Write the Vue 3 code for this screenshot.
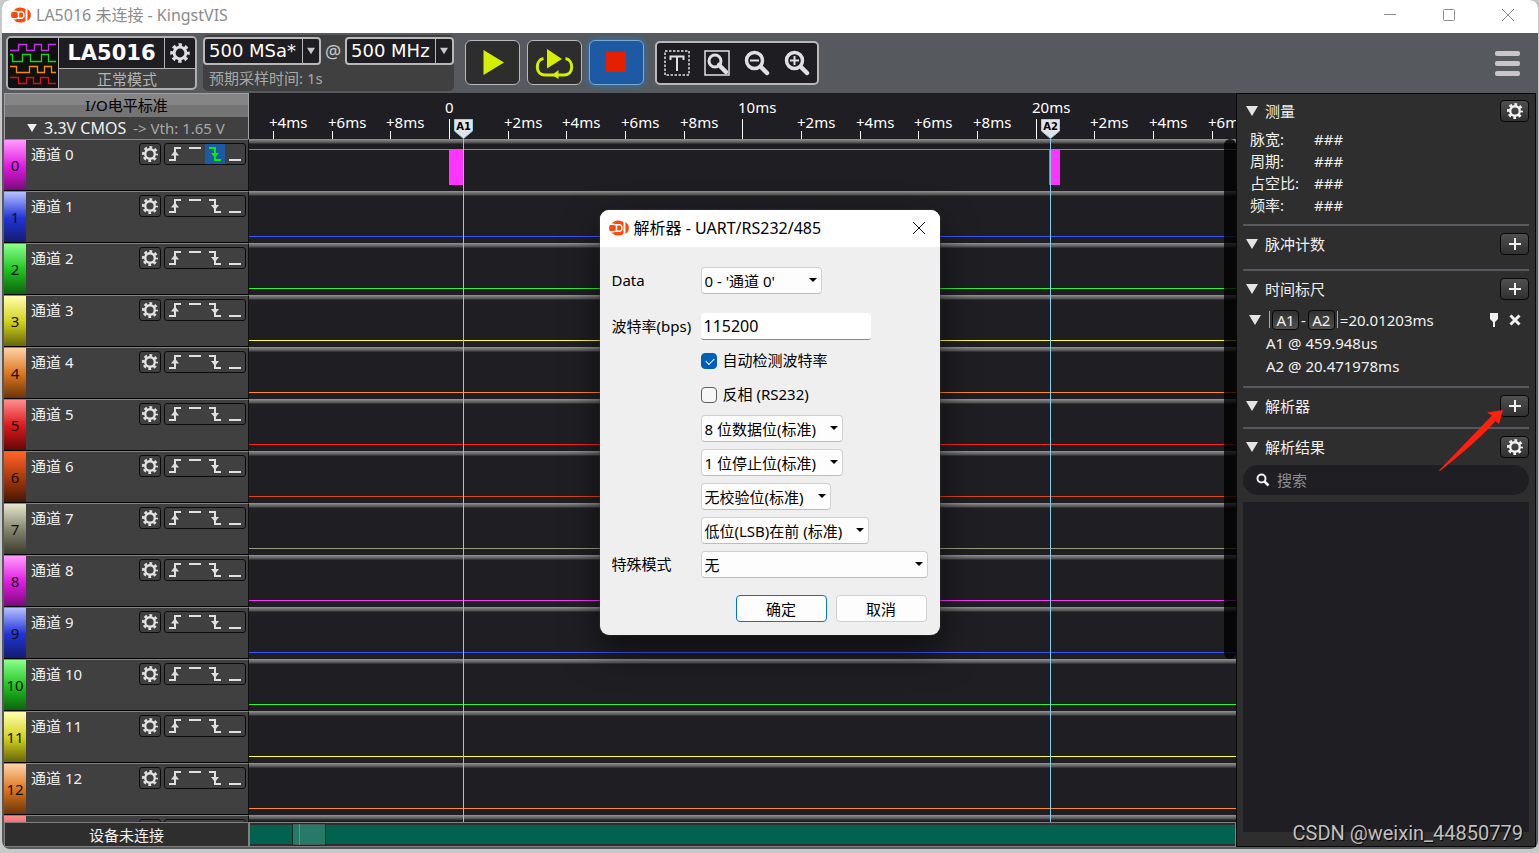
<script setup>
import { ref } from 'vue'

const palette = [
  ['#ff9cff', '#e21be2', '#7a0a7a', '#ff35ff'],
  ['#b4c0ff', '#2233d8', '#131d70', '#3a55ff'],
  ['#8cff8c', '#1fc41f', '#0d620d', '#2bf52b'],
  ['#ffffae', '#d2d21c', '#66660c', '#ffff30'],
  ['#ffd2a6', '#dc741c', '#6a350a', '#ff8c2c'],
  ['#ff8c8c', '#dc1818', '#620808', '#ff2020'],
  ['#ff6428', '#a8380c', '#461604', '#d84a10'],
  ['#e6e6cc', '#84846c', '#3a3a2e', '#9c9c80'],
]

const channels = Array.from({ length: 14 }, (_, i) => {
  const [light, mid, dark, line] = palette[i % palette.length]
  return {
    id: i,
    name: `通道 ${i}`,
    tag: { background: `linear-gradient(${light}, ${mid} 52%, ${dark})` },
    line,
  }
})

const triggers = [
  { key: 'rise', label: '上升沿' },
  { key: 'high', label: '高电平' },
  { key: 'fall', label: '下降沿' },
  { key: 'low', label: '低电平' },
]

// Time scale of the plot: horizontal origin and pixels per millisecond.
const originPx = 200.1
const pxPerMs = 29.33
const at = (ms) => `${Math.round(originPx + ms * pxPerMs)}px`
const ticks = []
for (let ms = -6; ms <= 26; ms += 2) {
  const major = ms % 10 === 0
  const rest = ((ms % 10) + 10) % 10
  ticks.push({ ms, major, label: major ? (ms ? `${ms}ms` : '0') : `+${rest}ms` })
}

const markers = [
  { name: 'A1', ms: 0.459948 },
  { name: 'A2', ms: 20.471978 },
]
const pulses = [
  { from: 0, to: 0.48 },
  { from: 20.47, to: 20.83 },
]

const measures = ['脉宽:', '周期:', '占空比:', '频率:']

const baud = ref('115200')
const autoDetect = ref(true)
const inverted = ref(false)
</script>

<template>
  <div class="desktop">
    <svg class="defs" aria-hidden="true">
      <symbol id="gear" viewBox="-9 -9 18 18">
        <circle r="4.8" fill="none" stroke="currentColor" stroke-width="2.4" />
        <circle r="6.5" fill="none" stroke="currentColor" stroke-width="3" stroke-dasharray="2.7 2.405" stroke-dashoffset="1.35" />
      </symbol>
      <symbol id="plus" viewBox="0 0 14 14">
        <path d="M7 1V13M1 7H13" fill="none" stroke="currentColor" stroke-width="2" />
      </symbol>
      <symbol id="down" viewBox="0 0 12 10">
        <path d="M0 0H12L6 10Z" fill="currentColor" />
      </symbol>
      <symbol id="brand" viewBox="0 0 20 16">
        <path d="M2.500 3.500A8.4 7.3 0 0 1 14.500 2V14A8.4 7.3 0 0 1 2.500 12.500H5.500V11H.8A7 7 0 0 1 .8 5H5.500V3.500Z" fill="#fb4a0c" />
        <path d="M5.500 4.800H10.500A2.300 2.300 0 0 1 12.800 7.100V8.900A2.300 2.300 0 0 1 10.500 11.200H5.500M7.500 4.800V11.200" fill="none" stroke="#fff" stroke-width="1.500" />
        <path d="M16.800 2.600Q19.800 4.800 19.500 8Q19.800 11.200 16.800 13.400Z" fill="#fb4a0c" stroke="#fb4a0c" stroke-width=".6" />
      </symbol>
      <symbol id="rise" viewBox="0 0 20 20">
        <path d="M4 16H10V4H16" fill="none" stroke="currentColor" stroke-width="2" />
        <path d="M6 11.5L10 6.5L14 11.5Z" fill="currentColor" />
      </symbol>
      <symbol id="high" viewBox="0 0 20 20">
        <path d="M4 4H16" stroke="currentColor" stroke-width="2" />
      </symbol>
      <symbol id="fall" viewBox="0 0 20 20">
        <path d="M4 4H10V16H16" fill="none" stroke="currentColor" stroke-width="2" />
        <path d="M6 9L10 14L14 9Z" fill="currentColor" />
      </symbol>
      <symbol id="low" viewBox="0 0 20 20">
        <path d="M4 16H16" stroke="currentColor" stroke-width="2" />
      </symbol>
    </svg>

    <div class="window">
      <header class="titlebar">
        <svg class="brand"><use href="#brand" /></svg>
        <h1>LA5016 未连接 - KingstVIS</h1>
        <div class="winctl">
          <button aria-label="最小化"><svg viewBox="0 0 12 12"><path d="M0 5.5H12" /></svg></button>
          <button aria-label="最大化"><svg viewBox="0 0 12 12"><rect x=".5" y=".5" width="11" height="11" rx="1" /></svg></button>
          <button aria-label="关闭"><svg viewBox="0 0 12 12"><path d="M0 0L12 12M12 0L0 12" /></svg></button>
        </div>
      </header>

      <div class="toolbar">
        <div class="device">
          <svg class="device-logo" viewBox="0 0 50 50">
            <g fill="none" stroke-width="1.3">
              <path stroke="#c234e8" d="M2 12.5H10.5V6.5H18.5V12.5H26.5V6.5H33.5V12.5H40.5V6.5H48" />
              <path stroke="#18d418" d="M2 16.5H4.5V23.5H14.5V16.5H22.5V23.5H33.5V16.5H40.5V23.5H48" />
              <path stroke="#f58a10" d="M2 28.5H8.5V34.5H21.5V28.5H29.5V34.5H36.5V28.5H43.5V34.5H48" />
              <path stroke="#d81212" d="M2 39.5H10.5V45.5H18.5V39.5H25.5V45.5H32.5V39.5H40.5V45.5H48" />
            </g>
          </svg>
          <div class="device-info">
            <div class="device-top">
              <strong>LA5016</strong>
              <button aria-label="设备设置"><svg class="i22"><use href="#gear" /></svg></button>
            </div>
            <div class="device-mode">正常模式</div>
          </div>
        </div>

        <div class="sampling">
          <div class="rates">
            <div class="combo">
              <select aria-label="采样率"><option>500 MSa*</option></select>
              <svg><use href="#down" /></svg>
            </div>
            <span>@</span>
            <div class="combo">
              <select aria-label="时钟"><option>500 MHz</option></select>
              <svg><use href="#down" /></svg>
            </div>
          </div>
          <div class="expected">预期采样时间: 1s</div>
        </div>

        <div class="runs">
          <button aria-label="开始">
            <svg viewBox="0 0 53 43"><path d="M17.5 9V34L38 21.5Z" fill="#d4f000" /></svg>
          </button>
          <button aria-label="循环采样">
            <svg viewBox="0 0 53 43">
              <path d="M19 8V27.5L34 18Z" fill="#d4f000" />
              <path d="M15.5 17.5C7 19 7 34 17 34H36C46 34 46 19 37.500 17.500" fill="none" stroke="#d4f000" stroke-width="3" />
              <path d="M24 34L30.500 29V38Z" fill="#d4f000" />
            </svg>
          </button>
          <button class="stop" aria-label="停止">
            <svg viewBox="0 0 53 43"><path d="M16 11H36V31H16Z" fill="#e42000" /></svg>
          </button>
        </div>

        <div class="zooms">
          <button aria-label="标签">
            <svg viewBox="0 0 26 26">
              <rect x="1" y="1" width="24" height="24" fill="none" stroke="#e0e0e0" stroke-width="1.500" stroke-dasharray="2.500 1.500" />
              <path d="M6.500 10V6.500H19.500V10M13 6.500V21" fill="none" stroke="#e0e0e0" stroke-width="2" />
            </svg>
          </button>
          <button aria-label="适应窗口">
            <svg viewBox="0 0 26 26" fill="none" stroke="#e0e0e0">
              <rect x="1" y="1" width="24" height="24" stroke-width="1.500" />
              <circle cx="11" cy="11" r="6" stroke-width="3" />
              <path d="M15 15L22 22" stroke-width="4.500" stroke-linecap="round" />
            </svg>
          </button>
          <button aria-label="缩小">
            <svg viewBox="0 0 26 26" fill="none" stroke="#e0e0e0">
              <circle cx="10.500" cy="10.500" r="8" stroke-width="3.500" />
              <path d="M17 17L23 23" stroke-width="4.500" stroke-linecap="round" />
              <path d="M6 10.500H15" stroke-width="2" />
            </svg>
          </button>
          <button aria-label="放大">
            <svg viewBox="0 0 26 26" fill="none" stroke="#e0e0e0">
              <circle cx="10.500" cy="10.500" r="8" stroke-width="3.500" />
              <path d="M17 17L23 23" stroke-width="4.500" stroke-linecap="round" />
              <path d="M6 10.500H15M10.500 6V15" stroke-width="2" />
            </svg>
          </button>
        </div>

        <button class="menu" aria-label="菜单"><i></i><i></i><i></i></button>
      </div>

      <div class="body">
        <main class="main">
          <div class="head">
            <div class="levels">
              <div class="levels-title">I/O电平标准</div>
              <button class="levels-value">
                <svg><use href="#down" /></svg><b>3.3V CMOS</b><span>-&gt; Vth: 1.65 V</span>
              </button>
            </div>
            <div class="ruler">
              <div v-for="t in ticks" :key="t.ms" class="tick" :class="{ major: t.major }" :style="{ left: at(t.ms) }">
                <span>{{ t.label }}</span>
              </div>
              <div v-for="m in markers" :key="m.name" class="flag" :style="{ left: at(m.ms) }">
                <svg viewBox="0 0 19 20"><path d="M.5 .5H18.500V12L9.500 19.500L.5 12Z" fill="#e4e4e4" stroke="#8fd0ec" /></svg>
                <b>{{ m.name }}</b>
              </div>
            </div>
          </div>

          <div class="channels">
            <div v-for="c in channels" :key="c.id" class="channel">
              <div class="panel">
                <div class="tag" :style="c.tag">{{ c.id }}</div>
                <span class="name">{{ c.name }}</span>
                <button class="cfg" :aria-label="c.name + ' 设置'"><svg class="i18"><use href="#gear" /></svg></button>
                <div class="triggers">
                  <button
                    v-for="t in triggers"
                    :key="t.key"
                    :class="{ on: c.id === 0 && t.key === 'fall' }"
                    :aria-label="t.label"
                  ><svg><use :href="'#' + t.key" /></svg></button>
                </div>
              </div>
              <div class="wave">
                <i class="level" :class="{ up: c.id === 0 }" :style="{ background: c.line }"></i>
                <template v-if="c.id === 0">
                  <i
                    v-for="p in pulses"
                    :key="p.from"
                    class="pulse"
                    :style="{ left: at(p.from), width: Math.round((p.to - p.from) * pxPerMs) + 'px' }"
                  ></i>
                </template>
              </div>
            </div>
            <div class="overlay">
              <i v-for="m in markers" :key="m.name" class="cursor" :style="{ left: at(m.ms) }"></i>
              <i class="vbar"></i>
            </div>
          </div>

          <footer class="foot">
            <div class="status">设备未连接</div>
            <div class="overview"><div class="handle"><i></i></div></div>
          </footer>
        </main>

        <aside class="side">
          <section>
            <div class="sec-head">
              <svg class="tri"><use href="#down" /></svg><h2>测量</h2>
              <button aria-label="测量设置"><svg class="i18"><use href="#gear" /></svg></button>
            </div>
            <dl>
              <template v-for="m in measures" :key="m"><dt>{{ m }}</dt><dd>###</dd></template>
            </dl>
          </section>
          <section class="pulse-count">
            <div class="sec-head">
              <svg class="tri"><use href="#down" /></svg><h2>脉冲计数</h2>
              <button aria-label="添加脉冲计数"><svg class="i14"><use href="#plus" /></svg></button>
            </div>
          </section>
          <section class="rulers">
            <div class="sec-head">
              <svg class="tri"><use href="#down" /></svg><h2>时间标尺</h2>
              <button aria-label="添加时间标尺"><svg class="i14"><use href="#plus" /></svg></button>
            </div>
            <div class="pair">
              <svg class="tri"><use href="#down" /></svg>
              <i class="bar"></i><button class="chip">A1</button><span>-</span><button class="chip">A2</button><i class="bar"></i><span>=20.01203ms</span>
              <button class="pin" aria-label="固定"><svg viewBox="0 0 10 14"><path d="M1 0H9V6L6 9V14H4V9L1 6Z" fill="currentColor" /></svg></button>
              <button class="drop" aria-label="删除"><svg viewBox="0 0 12 12"><path d="M1.500 1.500L10.500 10.500M10.500 1.500L1.500 10.500" stroke="currentColor" stroke-width="3" /></svg></button>
            </div>
            <p>A1 @ 459.948us</p>
            <p>A2 @ 20.471978ms</p>
          </section>
          <section class="decoders">
            <div class="sec-head">
              <svg class="tri"><use href="#down" /></svg><h2>解析器</h2>
              <button aria-label="添加解析器"><svg class="i14"><use href="#plus" /></svg></button>
            </div>
            <svg class="pointer" viewBox="0 0 65 61"><path d="M0 60.500L53 5.500L48 2.500L64 0L60 14L56.500 11Q40 30 1 61Z" fill="#ff2010" /></svg>
          </section>
          <section class="results">
            <div class="sec-head">
              <svg class="tri"><use href="#down" /></svg><h2>解析结果</h2>
              <button aria-label="结果设置"><svg class="i18"><use href="#gear" /></svg></button>
            </div>
            <label class="search">
              <svg viewBox="0 0 14 14" fill="none" stroke="#f0f0f0"><circle cx="5.500" cy="5.500" r="4" stroke-width="2" /><path d="M8.500 8.500L12.500 12.500" stroke-width="2.500" /></svg>
              <input type="search" placeholder="搜索" aria-label="搜索" />
            </label>
            <div class="list"></div>
          </section>
        </aside>
      </div>
    </div>

    <div class="modal">
      <form class="dialog" role="dialog" aria-labelledby="dlg-title" @submit.prevent>
        <header>
          <svg class="brand"><use href="#brand" /></svg>
          <h2 id="dlg-title">解析器 - UART/RS232/485</h2>
          <button type="button" aria-label="关闭"><svg viewBox="0 0 12 12"><path d="M0 0L12 12M12 0L0 12" /></svg></button>
        </header>
        <div class="fields">
          <label for="f-data" class="first">Data</label>
          <div class="pick data first"><select id="f-data"><option>0 - '通道 0'</option></select></div>
          <label for="f-baud">波特率(bps)</label>
          <input id="f-baud" v-model="baud" class="baud" type="text" />
          <label class="check"><input v-model="autoDetect" type="checkbox" />自动检测波特率</label>
          <label class="check"><input v-model="inverted" type="checkbox" />反相 (RS232)</label>
          <div class="pick"><select aria-label="数据位"><option>8 位数据位(标准)</option></select></div>
          <div class="pick"><select aria-label="停止位"><option>1 位停止位(标准)</option></select></div>
          <div class="pick"><select aria-label="校验位"><option>无校验位(标准)</option></select></div>
          <div class="pick"><select aria-label="位序"><option>低位(LSB)在前 (标准)</option></select></div>
          <label for="f-mode">特殊模式</label>
          <div class="pick wide"><select id="f-mode"><option>无</option></select></div>
        </div>
        <div class="actions">
          <button type="submit" class="primary">确定</button>
          <button type="button">取消</button>
        </div>
      </form>
    </div>

    <div class="watermark">CSDN @weixin_44850779</div>
  </div>
</template>

<style>
body {
  background: #c9c9c9;
}
</style>

<style scoped>
* {
  box-sizing: border-box;
}
.desktop {
  position: relative;
  height: 100vh;
  padding: 0 1px 4px 2px;
  background: #c9c9c9;
  font: 15px/22px "Noto Sans", "Noto Sans CJK SC", sans-serif;
  color: #f0f0f0;
  overflow: hidden;
}
.defs {
  position: absolute;
  width: 0;
  height: 0;
}
button,
select,
input {
  font: inherit;
  color: inherit;
  margin: 0;
  padding: 0;
  border: 0;
  background: none;
}
button {
  display: flex;
  align-items: center;
  justify-content: center;
}
select {
  appearance: none;
}
svg {
  display: block;
  flex: none;
}
h1,
h2,
p,
dl,
dd {
  margin: 0;
  font: inherit;
}
.i14 { width: 14px; height: 14px; }
.i18 { width: 18px; height: 18px; }
.i22 { width: 22px; height: 22px; }
.tri { width: 12px; height: 10px; color: #e4e4e4; }
.brand { width: 20px; height: 16px; }

.window {
  height: 100%;
  display: flex;
  flex-direction: column;
  background: #565a5e;
  border-radius: 8px;
  overflow: hidden;
}
.titlebar {
  flex: none;
  height: 33px;
  padding: 0 24px 4px 9px;
  display: flex;
  align-items: center;
  gap: 5px;
  background: #fff;
  color: #8c8c8c;
  font-size: 16px;
}
.winctl {
  margin-left: auto;
  display: flex;
  gap: 47px;
}
.winctl svg {
  width: 12px;
  height: 12px;
  fill: none;
  stroke: #8c8c8c;
}

.toolbar {
  flex: none;
  height: 60px;
  padding: 2px 18px 2px 4px;
  display: flex;
  align-items: center;
}
.device {
  width: 191px;
  height: 54px;
  display: flex;
  border: 2px solid #b0b0b0;
  border-radius: 5px;
  background: #404040;
  overflow: hidden;
}
.device-logo {
  width: 50px;
  height: 50px;
  background: #101010;
}
.device-info {
  flex: 1;
  display: flex;
  flex-direction: column;
  border-left: 1px solid #b0b0b0;
}
.device-top {
  height: 31px;
  display: flex;
  background: #1e1d22;
  border-bottom: 1px solid #b0b0b0;
}
.device-top strong {
  flex: 1;
  text-align: center;
  font: bold 21px/31px "DejaVu Sans", sans-serif;
  color: #fff;
}
.device-top button {
  width: 31px;
  border-left: 1px solid #b0b0b0;
  color: #e0e0e0;
}
.device-mode {
  text-align: center;
  line-height: 21px;
  color: #b4b4b4;
}
.sampling {
  margin-left: 6px;
  width: 251px;
  height: 56px;
  padding: 2px 0;
  background: #404040;
  border-radius: 5px;
}
.rates {
  display: flex;
  align-items: center;
  justify-content: space-between;
  font-size: 18px;
  color: #c8c8c8;
}
.combo {
  display: flex;
  align-items: center;
  height: 28px;
  padding-right: 4px;
  border: 2px solid #b8b8b8;
  border-radius: 4px;
  background: #1e1d22;
}
.combo select {
  height: 24px;
  padding: 0 5px 0 4px;
  border-right: 1px solid #b8b8b8;
  font: 18px/24px "DejaVu Sans", "Noto Sans", sans-serif;
  color: #fff;
}
.combo svg {
  width: 8px;
  height: 8px;
  margin-left: 4px;
}
.expected {
  padding-left: 6px;
  line-height: 26px;
  color: #a8a8a8;
}
.runs {
  margin: 0 0 2px 11px;
  display: flex;
  gap: 7px;
}
.runs button {
  width: 55px;
  height: 45px;
  border: 1px solid #b8b8b8;
  border-radius: 6px;
  background: #2d2d2d;
}
.runs svg {
  width: 53px;
  height: 43px;
}
.runs .stop {
  background: #1e5aa4;
  border-color: #78a8d4;
  box-shadow: 0 0 7px #2c7ac0;
}
.zooms {
  margin-left: 11px;
  width: 164px;
  height: 44px;
  padding: 0 7px;
  display: flex;
  justify-content: space-between;
  align-items: center;
  border: 2px solid #b8b8b8;
  border-radius: 5px;
  background: #1e1d22;
}
.zooms svg {
  width: 26px;
  height: 26px;
}
.menu {
  margin-left: auto;
  flex-direction: column;
  gap: 5px;
}
.menu i {
  width: 25px;
  height: 5px;
  border-radius: 2px;
  background: #c8c6c8;
}

.body {
  flex: 1;
  min-height: 0;
  display: flex;
  padding: 0 2px 2px;
}
.main {
  flex: 1;
  min-width: 0;
  display: flex;
  flex-direction: column;
  background: #1f1e23;
}
.head {
  flex: none;
  display: flex;
  height: 46px;
}
.levels {
  flex: none;
  width: 245px;
  border: 1px solid #a0a0a0;
  border-bottom: 0;
  background: #404040;
}
.levels-title {
  text-align: center;
  line-height: 23px;
  color: #000;
  background: linear-gradient(#858585 50%, #747474 50%);
}
.levels-value {
  width: 100%;
  height: 22px;
  justify-content: flex-start;
  padding-left: 22px;
  gap: 7px;
}
.levels-value svg {
  width: 10px;
  height: 8px;
}
.levels-value b {
  font-size: 16px;
  font-weight: 400;
}
.levels-value span {
  color: #a8a8a8;
}
.ruler {
  flex: 1;
  position: relative;
  overflow: hidden;
}
.tick {
  position: absolute;
  bottom: 0;
  width: 1px;
  height: 8px;
  background: #fff;
}
.tick.major {
  height: 20px;
}
.tick span {
  position: absolute;
  left: -4px;
  bottom: 6px;
  color: #fff;
  white-space: nowrap;
}
.tick.major span {
  bottom: 21px;
}
.flag {
  position: absolute;
  bottom: 0;
  width: 19px;
  height: 20px;
  margin-left: -9px;
}
.flag svg {
  position: absolute;
  inset: 0;
  width: 100%;
  height: 100%;
}
.flag b {
  position: relative;
  display: block;
  text-align: center;
  font: bold 10px/16px "DejaVu Sans", sans-serif;
  color: #000;
}

.channels {
  flex: 1;
  min-height: 0;
  position: relative;
  overflow: hidden;
}
.channel {
  display: flex;
  height: 52px;
}
.panel {
  flex: none;
  width: 245px;
  display: flex;
  align-items: flex-start;
  gap: 3px;
  padding-right: 2px;
  background: #404040;
  border-top: 1px solid #858585;
  border-bottom: 1px solid #000;
  border-right: 1px solid #101010;
}
.tag {
  width: 22px;
  height: 50px;
  text-align: center;
  line-height: 50px;
  color: #101010;
}
.name {
  flex: 1;
  padding: 3px 0 0 2px;
}
.cfg,
.triggers {
  margin-top: 3px;
  height: 22px;
  border: 1px solid #0c0c0c;
  border-radius: 3px;
  color: #e0e0e0;
}
.cfg {
  width: 22px;
}
.triggers {
  display: flex;
}
.triggers svg {
  width: 20px;
  height: 20px;
}
.triggers .on {
  background: #1e5aa4;
  color: #00f000;
}
.wave {
  flex: 1;
  position: relative;
  background: linear-gradient(#959595, #707070 2px, #4c4c4c 4px, #1f1e23 5px);
}
.level {
  position: absolute;
  left: 0;
  right: 0;
  top: 45px;
  height: 1px;
}
.level.up {
  top: 10px;
}
.pulse {
  position: absolute;
  top: 10px;
  height: 36px;
  background: #ff35ff;
}
.overlay {
  position: absolute;
  inset: 0 0 0 245px;
  pointer-events: none;
}
.cursor {
  position: absolute;
  top: 0;
  bottom: 0;
  width: 1px;
  background: #82cdeb;
}
.vbar {
  position: absolute;
  top: 0;
  right: 0;
  width: 12px;
  height: 520px;
  border-radius: 6px;
  background: rgba(0, 0, 0, 0.78);
}
.foot {
  flex: none;
  height: 25px;
  display: flex;
}
.status {
  flex: none;
  width: 245px;
  text-align: center;
  line-height: 24px;
  border: 1px solid #808080;
  background: #2e2e2e;
}
.overview {
  flex: 1;
  border: 1px solid #808080;
  background: linear-gradient(#2e2e2e 2px, #00624f 2px, #00624f 21px, #2e2e2e 21px);
}
.handle {
  width: 34px;
  height: 23px;
  margin-left: 42px;
  padding-left: 6px;
  border: 1px solid #182c28;
  background: rgba(110, 170, 150, 0.35);
}
.handle i {
  display: block;
  width: 1px;
  height: 21px;
  background: #10d010;
}

.side {
  flex: none;
  width: 300px;
  padding: 0 6px 14px;
  display: flex;
  flex-direction: column;
  border: 1px solid #080808;
  background: #2e2e2e;
}
.side section {
  padding: 6px 0 7px;
  border-bottom: 2px solid #55585c;
}
.sec-head {
  display: flex;
  align-items: center;
  gap: 7px;
  padding-left: 3px;
}
.sec-head button {
  margin-left: auto;
  width: 29px;
  height: 22px;
  border: 1px solid #080808;
  border-radius: 4px;
  background: linear-gradient(#505050, #303030);
}
.side dl {
  display: grid;
  grid-template-columns: 64px 1fr;
  padding: 6px 0 1px 7px;
}
.side .pulse-count {
  padding: 7px 0 14px;
}
.side .rulers {
  padding: 7px 0 8px;
}
.pair {
  display: flex;
  align-items: center;
  gap: 2px;
  height: 23px;
  margin-top: 8px;
  margin-bottom: 1px;
  padding: 0 8px 0 6px;
}
.pair .bar {
  width: 1px;
  height: 17px;
  margin-left: 6px;
  background: #7ab4dc;
}
.pair .chip + .bar {
  margin: 0;
}
.chip {
  width: 27px;
  height: 20px;
  border: 1px solid #080808;
  border-radius: 4px;
  background: linear-gradient(#303030, #505050);
}
.pin {
  margin-left: auto;
}
.pin svg {
  width: 10px;
  height: 14px;
}
.drop {
  margin-left: 8px;
}
.drop svg {
  width: 12px;
  height: 12px;
}
.rulers p {
  padding-left: 23px;
  line-height: 23px;
}
.side .decoders {
  position: relative;
  padding: 7px 0 10px;
}
.pointer {
  position: absolute;
  top: 22px;
  right: 25px;
  width: 65px;
  height: 61px;
}
.side .results {
  flex: 1;
  display: flex;
  flex-direction: column;
  gap: 7px;
  padding: 7px 0 0;
  border: 0;
}
.search {
  display: flex;
  align-items: center;
  gap: 7px;
  height: 30px;
  padding: 0 13px;
  border-radius: 15px;
  background: #1f1e23;
}
.search svg {
  width: 14px;
  height: 14px;
}
.search input {
  flex: 1;
  min-width: 0;
  outline: 0;
  appearance: none;
}
.search input::placeholder {
  color: #8c8c8c;
}
.list {
  flex: 1;
  background: #1f1e23;
}

.modal {
  position: absolute;
  inset: 0 0 8px;
  display: flex;
  align-items: center;
  justify-content: center;
}
.dialog {
  width: 340px;
  padding-bottom: 13px;
  border-radius: 9px;
  background: #efefef;
  color: #000;
  overflow: hidden;
  box-shadow: 0 16px 36px rgba(0, 0, 0, 0.55), 0 0 2px #555;
}
.dialog header {
  display: flex;
  align-items: center;
  gap: 5px;
  height: 37px;
  padding: 0 15px 1px 9px;
  background: #fff;
  font-size: 16px;
}
.dialog header button {
  margin-left: auto;
}
.dialog header button svg {
  width: 12px;
  height: 12px;
  stroke: #111;
}
.fields {
  display: grid;
  grid-template-columns: 89px 1fr;
  row-gap: 7px;
  align-items: center;
  padding: 20px 12px 0;
}
.fields > * {
  grid-column: 2;
  height: 27px;
  line-height: 27px;
}
.fields > label[for] {
  grid-column: 1;
  white-space: nowrap;
}
.fields > .first {
  margin-bottom: 12px;
}
.pick {
  position: relative;
  justify-self: start;
}
.pick::after {
  content: "";
  position: absolute;
  right: 5px;
  top: 11px;
  border: solid transparent;
  border-width: 4px 4px 0;
  border-top-color: #000;
}
.pick select {
  width: 100%;
  height: 27px;
  padding: 0 25px 0 3px;
  border: 1px solid #d0d0d0;
  border-bottom-color: #bcbcbc;
  border-radius: 4px;
  background: #fdfdfd;
}
.pick.data {
  width: 121px;
}
.pick.wide {
  width: 100%;
}
.baud {
  width: 170px;
  padding: 0 3px;
  background: #fff;
  border-bottom: 1px solid #868686;
  border-radius: 3px;
  font-size: 16px;
}
.check {
  display: flex;
  align-items: center;
  gap: 6px;
}
.check input {
  appearance: none;
  width: 16px;
  height: 16px;
  border: 1px solid #606060;
  border-radius: 4px;
  background: #f6f6f6;
}
.check input:checked {
  border-color: #005fb8;
  background: #005fb8;
}
.check input:checked::after {
  content: "";
  display: block;
  width: 7px;
  height: 4px;
  margin: 4px 0 0 4px;
  border: solid #fff;
  border-width: 0 0 1px 1px;
  transform: rotate(-45deg);
}
.actions {
  display: flex;
  justify-content: flex-end;
  gap: 9px;
  padding: 17px 13px 0;
}
.actions button {
  width: 91px;
  height: 27px;
  border: 1px solid #d0d0d0;
  border-radius: 4px;
  background: #fdfdfd;
}
.actions .primary {
  border-color: #0078d4;
}
.watermark {
  position: absolute;
  right: 16px;
  bottom: 8px;
  font: 20px/24px Roboto, "Liberation Sans", sans-serif;
  color: #c0c0c0;
  text-shadow: 1px 1px 1px #000;
}
</style>
